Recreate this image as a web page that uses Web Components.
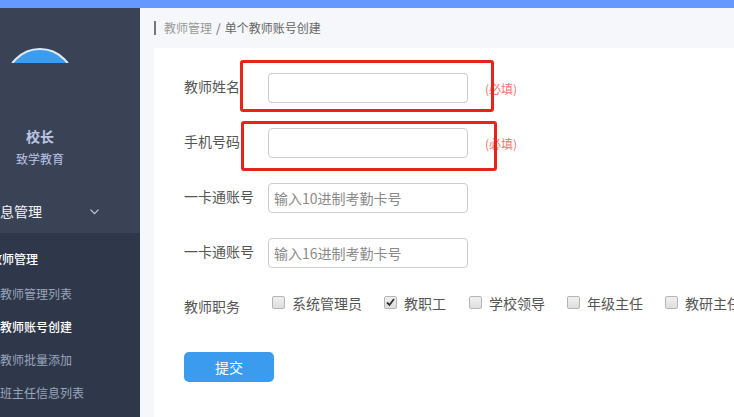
<!DOCTYPE html>
<html lang="zh">
<head>
<meta charset="utf-8">
<title>单个教师账号创建</title>
<style>
  html, body { margin: 0; height: 100%; overflow: hidden; }
  body { font-family: "Noto Sans CJK SC", "Liberation Sans", sans-serif; }
</style>
</head>
<body>
<app-shell>
  <side-bar slot="side"></side-bar>
  <bread-crumb slot="main" parent="教师管理" current="单个教师账号创建"></bread-crumb>
  <teacher-form slot="main"></teacher-form>
</app-shell>

<script>
class AppShell extends HTMLElement {
  constructor() {
    super()
    this.attachShadow({ mode: 'open' }).innerHTML = `
      <style>
        :host { display: grid; grid-template-rows: 8px 1fr; grid-template-columns: 140px 1fr; height: 417px; overflow: hidden; background: #f5f7fa; }
        .top { grid-column: 1 / -1; background: #6699ff; }
        .main { min-width: 0; padding-left: 14px; overflow: hidden; }
      </style>
      <div class="top"></div>
      <slot name="side"></slot>
      <div class="main"><slot name="main"></slot></div>
    `
  }
}

class SideBar extends HTMLElement {
  constructor() {
    super()
    this.attachShadow({ mode: 'open' }).innerHTML = `
      <style>
        :host { display: block; width: 140px; height: 409px; overflow: hidden; background: #3a4356; color: #bcc6e4; }
        .user { height: 182px; box-sizing: border-box; padding-top: 40px; width: 80px; text-align: center; }
        .clip { height: 15px; overflow: hidden; display: flex; justify-content: center; }
        .avatar { flex: none; width: 70px; height: 70px; box-sizing: border-box; border-radius: 50%; background: #3a9df0; border: 2px solid #dcebf7; }
        .name { margin-top: 63px; font-size: 14px; line-height: 20px; font-weight: 700; }
        .org { margin-top: 3px; font-size: 12px; line-height: 20px; }
        .head { height: 43px; display: flex; align-items: center; color: #f2f4f8; font-size: 14px; }
        .head span { margin-left: -14px; width: 104px; flex: none; white-space: nowrap; position: relative; top: -1px; }
        .sub { background: #2f384a; height: 184px; padding-top: 9px; font-size: 12px; }
        .sub div { line-height: 33px; height: 33px; white-space: nowrap; color: #9aa4bb; }
        .sub .group { margin-left: -10px; height: 35px; line-height: 34px; color: #fff; font-weight: 500; }
        .sub .on { color: #fff; font-weight: 500; }
      </style>
      <div class="user">
        <div class="clip"><div class="avatar"></div></div>
        <div class="name">校长</div>
        <div class="org">致学教育</div>
      </div>
      <div class="head">
        <span>信息管理</span>
        <svg width="9" height="6" viewBox="0 0 9 6" fill="none" stroke="#c5ccdb" stroke-width="1.2"><path d="M.5.7 4.5 4.7 8.500.7"/></svg>
      </div>
      <div class="sub">
        <div class="group">教师管理</div>
        <div>教师管理列表</div>
        <div class="on">教师账号创建</div>
        <div>教师批量添加</div>
        <div>班主任信息列表</div>
      </div>
    `
  }
}

class BreadCrumb extends HTMLElement {
  constructor() {
    super()
    this.attachShadow({ mode: 'open' }).innerHTML = `
      <style>
        :host { display: flex; align-items: center; height: 40px; font-size: 12px; color: #666; }
        i { width: 2px; height: 14px; background: #777; margin-right: 8px; }
        span { position: relative; top: -1px; }
        .p { color: #999; }
        .s { margin: 0 4px; }
      </style>
      <i></i><span class="p">${this.getAttribute('parent')}</span><span class="s">/</span><span>${this.getAttribute('current')}</span>
    `
  }
}

class FormRow extends HTMLElement {
  constructor() {
    super()
    this.attachShadow({ mode: 'open' }).innerHTML = `
      <style>
        :host { display: flex; align-items: center; height: 30px; margin-bottom: 25px; font-size: 14px; color: #555; }
        .label { width: 84px; flex: none; white-space: nowrap; padding-bottom: 4px; line-height: 20px; }
        input { box-sizing: border-box; width: 200px; height: 30px; margin: 0; padding: 0 5px; border: 1px solid #ccc; border-radius: 4px; background: #fff; font: 14px "Noto Sans CJK SC", "Liberation Sans", sans-serif; outline: none; }
        input::placeholder { color: #8a8a8a; }
        .hint { margin-left: 17px; font-size: 12px; color: #f0716e; }
      </style>
      <div class="label"><slot name="label"></slot></div>
      <input type="text" placeholder="${this.getAttribute('placeholder') || ''}">
      ${this.hasAttribute('required') ? '<span class="hint">(必填)</span>' : ''}
    `
  }
}

class CheckItem extends HTMLElement {
  constructor() {
    super()
    const on = this.hasAttribute('checked')
    this.attachShadow({ mode: 'open' }).innerHTML = `
      <style>
        :host { display: flex; align-items: flex-start; flex: none; margin-right: 22px; font-size: 14px; line-height: 20px; color: #555; white-space: nowrap; }
        :host([checked]) { margin-right: 23px; }
        .box { width: 13px; height: 13px; box-sizing: border-box; margin: 3px 7px 0 0; border: 1px solid #b5b5b5; border-radius: 2px; background: linear-gradient(#f0f0f0, #dedede); display: flex; }
      </style>
      <span class="box">${on ? '<svg width="11" height="11" viewBox="0 0 11 11" fill="none" stroke="#333" stroke-width="1.8"><path d="M2 5.500 4.500 8 9 2"/></svg>' : ''}</span>
      <slot></slot>
    `
  }
}

class SubmitButton extends HTMLElement {
  constructor() {
    super()
    this.attachShadow({ mode: 'open' }).innerHTML = `
      <style>
        :host { display: flex; align-items: center; justify-content: center; width: 90px; height: 30px; border-radius: 5px; background: #3a9bef; color: #fff; font-size: 14px; }
      </style>
      <slot></slot>
    `
  }
}

class TeacherForm extends HTMLElement {
  constructor() {
    super()
    this.attachShadow({ mode: 'open' }).innerHTML = `
      <style>
        :host { display: block; position: relative; height: 369px; box-sizing: border-box; background: #fff; padding: 25px 0 0 30px; overflow: hidden; }
        .duty { display: flex; align-items: flex-start; height: 34px; margin-bottom: 25px; font-size: 14px; line-height: 20px; color: #555; }
        .duty .label { width: 88px; flex: none; padding-top: 3px; }
        .mark { position: absolute; box-sizing: border-box; border: 3px solid #e8231a; border-radius: 3px; }
        .m1 { left: 86px; top: 12px; width: 254px; height: 52px; }
        .m2 { left: 87px; top: 73px; width: 256px; height: 50px; }
      </style>
      <form-row required><span slot="label">教师姓名</span></form-row>
      <form-row required><span slot="label">手机号码</span></form-row>
      <form-row placeholder="输入10进制考勤卡号"><span slot="label">一卡通账号</span></form-row>
      <form-row placeholder="输入16进制考勤卡号"><span slot="label">一卡通账号</span></form-row>
      <div class="duty">
        <span class="label">教师职务</span>
        <check-item>系统管理员</check-item>
        <check-item checked>教职工</check-item>
        <check-item>学校领导</check-item>
        <check-item>年级主任</check-item>
        <check-item>教研主任</check-item>
      </div>
      <submit-button>提交</submit-button>
      <div class="mark m1"></div>
      <div class="mark m2"></div>
    `
  }
}

customElements.define('form-row', FormRow)
customElements.define('check-item', CheckItem)
customElements.define('submit-button', SubmitButton)
customElements.define('teacher-form', TeacherForm)
customElements.define('bread-crumb', BreadCrumb)
customElements.define('side-bar', SideBar)
customElements.define('app-shell', AppShell)
</script>
</body>
</html>
